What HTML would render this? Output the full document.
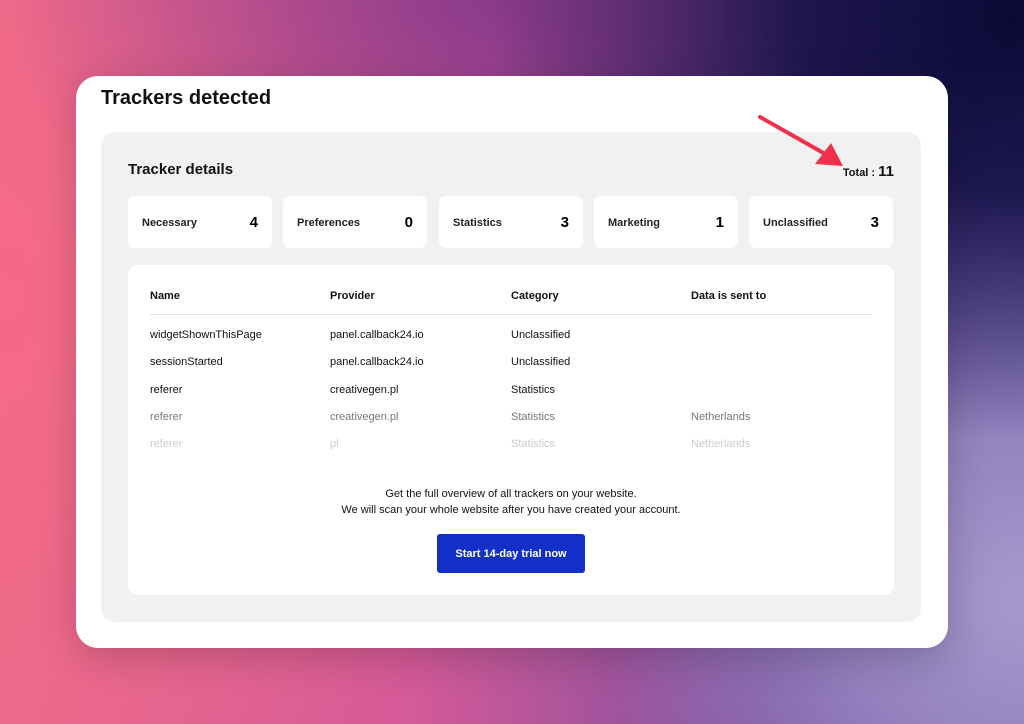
<!DOCTYPE html>
<html><head><meta charset="utf-8"><style>
*{margin:0;padding:0;box-sizing:border-box}
body{width:1024px;height:724px;overflow:hidden;position:relative;font-family:"Liberation Sans",Arial,sans-serif;color:#111;
background:
radial-gradient(ellipse 520px 420px at 1010px 20px,#0b0a35 0%,rgba(20,16,70,.9) 40%,rgba(40,30,100,0) 100%),
radial-gradient(ellipse 420px 420px at 1024px 600px,#a799cc 0%,rgba(160,145,200,.7) 45%,rgba(150,130,200,0) 100%),
radial-gradient(ellipse 500px 300px at 500px 0px,#8a3a8a 0%,rgba(130,50,130,0) 100%),
radial-gradient(ellipse 600px 500px at 0px 300px,#f56a86 0%,rgba(245,106,134,0) 100%),
linear-gradient(90deg,#ee6b8c 0%,#d55a98 40%,#7a4fa0 75%,#6a5aa8 100%);}
.card{position:absolute;left:76px;top:76px;width:872px;height:572px;background:#fff;border-radius:22px;box-shadow:0 10px 40px rgba(0,0,0,.2)}
h1{position:absolute;left:25px;top:11px;font-size:20px;font-weight:bold}
.panel{position:absolute;left:25px;top:56px;width:820px;height:490px;background:#f1f1f1;border-radius:14px}
.td{position:absolute;left:27px;top:29px;font-size:15px;font-weight:bold}
.tot{position:absolute;right:27px;top:31px;font-size:11px;font-weight:bold}
.tot b{font-size:15px}
.stat{position:absolute;top:64px;width:144px;height:52px;background:#fff;border-radius:7px;font-size:11px;font-weight:bold;color:#222}
.stat span{position:absolute;left:14px;top:21px}
.stat i{position:absolute;right:14px;top:18px;font-style:normal;font-size:15px;color:#000}
.tbl{position:absolute;left:27px;top:133px;width:766px;height:330px;background:#fff;border-radius:10px}
.c{position:absolute;font-size:11px;color:#111}
.h{font-weight:bold;top:25px}
.line{position:absolute;left:22px;top:49px;width:722px;height:1px;background:#e2e2e2}
.msg{position:absolute;left:0;width:766px;text-align:center;font-size:11px;line-height:16px;top:221px}
.btn{position:absolute;left:309px;top:269px;width:148px;height:39px;background:#1230c8;border-radius:3px;color:#fff;font-size:11px;font-weight:bold;text-align:center;line-height:40px}
.arrow{position:absolute;left:755px;top:112px;z-index:5}
</style></head><body>
<div class="card">
<h1>Trackers detected</h1>
<div class="panel">
<div class="td">Tracker details</div>
<div class="tot">Total : <b>11</b></div>
<div class="stat" style="left:27px"><span>Necessary</span><i>4</i></div>
<div class="stat" style="left:182px"><span>Preferences</span><i>0</i></div>
<div class="stat" style="left:338px"><span>Statistics</span><i>3</i></div>
<div class="stat" style="left:493px"><span>Marketing</span><i>1</i></div>
<div class="stat" style="left:648px"><span>Unclassified</span><i>3</i></div>
<div class="tbl">
<div class="c h" style="left:22px">Name</div><div class="c h" style="left:202px">Provider</div><div class="c h" style="left:383px">Category</div><div class="c h" style="left:563px">Data is sent to</div>
<div class="line"></div>
<div class="c" style="left:22px;top:64px">widgetShownThisPage</div><div class="c" style="left:202px;top:64px">panel.callback24.io</div><div class="c" style="left:383px;top:64px">Unclassified</div>
<div class="c" style="left:22px;top:91px">sessionStarted</div><div class="c" style="left:202px;top:91px">panel.callback24.io</div><div class="c" style="left:383px;top:91px">Unclassified</div>
<div class="c" style="left:22px;top:119px">referer</div><div class="c" style="left:202px;top:119px">creativegen.pl</div><div class="c" style="left:383px;top:119px">Statistics</div>
<div class="c" style="left:22px;top:146px;color:#777">referer</div><div class="c" style="left:202px;top:146px;color:#777">creativegen.pl</div><div class="c" style="left:383px;top:146px;color:#777">Statistics</div><div class="c" style="left:563px;top:146px;color:#777">Netherlands</div>
<div class="c" style="left:22px;top:173px;color:#ccc">referer</div><div class="c" style="left:202px;top:173px;color:#ccc">pl</div><div class="c" style="left:383px;top:173px;color:#ccc">Statistics</div><div class="c" style="left:563px;top:173px;color:#ccc">Netherlands</div>
<div class="msg">Get the full overview of all trackers on your website.<br>We will scan your whole website after you have created your account.</div>
<div class="btn">Start 14-day trial now</div>
</div>
</div>
</div>
<svg class="arrow" width="95" height="60"><line x1="5" y1="5" x2="72" y2="43" stroke="#f0304a" stroke-width="4" stroke-linecap="round"/><polygon points="88,54 60,52 76,31" fill="#f0304a"/></svg>
</body></html>
